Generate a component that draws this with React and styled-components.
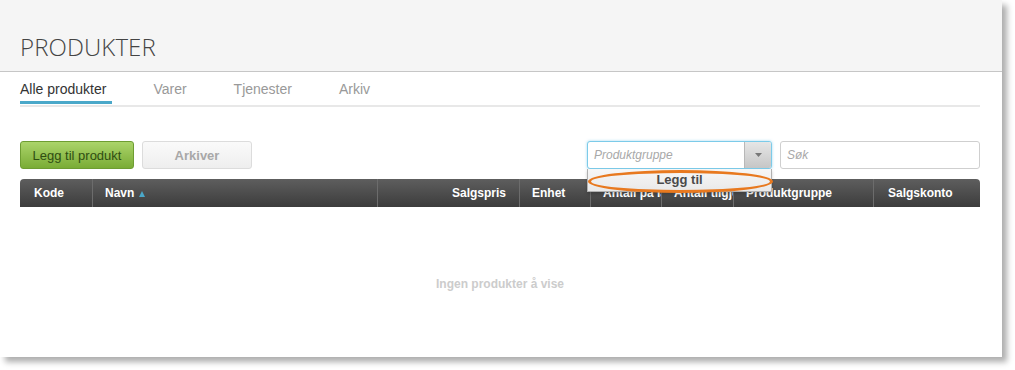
import styled, { createGlobalStyle } from 'styled-components';

const GlobalStyle = createGlobalStyle`
    body {
        margin: 0;
        background: #ffffff;
        font-family: "Liberation Sans", Arial, sans-serif;
    }
`;

const Page = styled.div`
    height: 370px;
    overflow: hidden;
`;

const Panel = styled.div`
    width: 1002px;
    height: 357px;
    background: #ffffff;
    box-shadow: 5px 5px 6px rgba(0, 0, 0, 0.32);
    display: flex;
    flex-direction: column;
`;

const Header = styled.div`
    height: 71px;
    background: #f5f5f5;
    border-bottom: 1px solid #c6c6c6;
    display: flex;
    align-items: flex-end;
    padding: 0 20px;
    box-sizing: content-box;
`;

const Title = styled.h1`
    margin: 0 0 9px;
    font-family: "Open Sans", sans-serif;
    font-weight: 300;
    font-size: 24px;
    line-height: 30px;
    color: #444;
    letter-spacing: 0.1px;
`;

const Body = styled.div`
    padding: 0 22px 0 20px;
    display: flex;
    flex-direction: column;
`;

const TabBar = styled.div`
    display: flex;
    gap: 41px;
    padding-top: 7px;
    border-bottom: 2px solid #e8e8e8;
`;

const Tab = styled.div`
    font-size: 14px;
    line-height: 20px;
    padding: 0 6px 2px 0;
    margin-bottom: 1px;
    color: ${({ $active }) => ($active ? '#333' : '#999')};
    border-bottom: 3px solid ${({ $active }) => ($active ? '#4aa8c9' : 'transparent')};
`;

const Toolbar = styled.div`
    display: flex;
    align-items: flex-start;
    margin-top: 34px;
    height: 28px;
`;

const Button = styled.button`
    height: 28px;
    padding: 0;
    width: ${({ $w }) => $w}px;
    margin-right: 8px;
    border-radius: 3px;
    font-family: "Liberation Sans", Arial, sans-serif;
    font-size: 13px;
    cursor: pointer;
`;

const GreenButton = styled(Button)`
    background: linear-gradient(#abd46a, #7aac36);
    border: 1px solid #6e9d32;
    color: #2f4d12;
`;

const GrayButton = styled(Button)`
    background: linear-gradient(#fafafa, #eeeeee);
    border: 1px solid #dcdcdc;
    color: #a8a8a8;
    font-weight: bold;
`;

const Spacer = styled.div`
    flex: 1;
`;

const SelectWrap = styled.div`
    position: relative;
    width: 185px;
    height: 28px;
    margin-right: 8px;
`;

const SelectBox = styled.div`
    height: 28px;
    box-sizing: border-box;
    border: 1px solid #7ccbe9;
    border-radius: 3px;
    box-shadow: 0 0 3px rgba(100, 190, 230, 0.6);
    display: flex;
    background: #fff;
`;

const Placeholder = styled.div`
    flex: 1;
    font-size: 12px;
    font-style: italic;
    color: #a8a8a8;
    line-height: 26px;
    padding-left: 6px;
`;

const ArrowBtn = styled.div`
    width: 26px;
    background: linear-gradient(#e6e6e6, #c6c6c6);
    border-left: 1px solid #b8b8b8;
    border-radius: 0 2px 2px 0;
    display: flex;
    align-items: center;
    justify-content: center;
`;

const Menu = styled.div`
    position: absolute;
    left: 0;
    top: 28px;
    width: 185px;
    height: 23px;
    box-sizing: border-box;
    border: 1px solid #b0b0b0;
    border-top: none;
    background: linear-gradient(#f7f7f7, #e9e9e9);
    box-shadow: 0 2px 3px rgba(0, 0, 0, 0.2);
    text-align: center;
    font-size: 13px;
    font-weight: bold;
    color: #4a4a4a;
    line-height: 22px;
    z-index: 2;
`;

const Highlight = styled.div`
    position: absolute;
    left: 1px;
    top: 29px;
    width: 185px;
    height: 23px;
    box-sizing: border-box;
    border: 3px solid #e8791f;
    border-radius: 50%;
    z-index: 3;
`;

const SearchInput = styled.div`
    width: 200px;
    height: 28px;
    box-sizing: border-box;
    border: 1px solid #cfcfcf;
    border-radius: 3px;
    font-size: 12px;
    font-style: italic;
    color: #a8a8a8;
    line-height: 26px;
    padding-left: 6px;
`;

const TableHead = styled.div`
    margin-top: 10px;
    height: 28px;
    display: flex;
    background: linear-gradient(#5e5e5e, #3c3c3c);
    border-radius: 4px 4px 0 0;
    overflow: hidden;
`;

const HeadCell = styled.div`
    width: ${({ $w }) => $w}px;
    box-sizing: border-box;
    padding: 0 ${({ $right }) => ($right ? '13px' : '4px')} 0 ${({ $pl }) => $pl ?? 12}px;
    text-align: ${({ $right }) => ($right ? 'right' : 'left')};
    border-left: ${({ $first }) => ($first ? 'none' : '1px solid #6c6c6c')};
    color: #fff;
    font-size: 12px;
    font-weight: bold;
    line-height: 28px;
    white-space: nowrap;
    overflow: hidden;
`;

const SortArrow = styled.span`
    display: inline-block;
    margin-left: 5px;
    width: 0;
    height: 0;
    border-left: 3px solid transparent;
    border-right: 3px solid transparent;
    border-bottom: 6px solid #4aa8c9;
    vertical-align: 0px;
`;

const Empty = styled.div`
    text-align: center;
    margin-top: 70px;
    font-size: 12px;
    font-weight: bold;
    color: #cccccc;
`;

const columns = [
    { label: 'Kode', w: 72, pl: 14 },
    { label: 'Navn', w: 285, sort: true },
    { label: 'Salgspris', w: 142, right: true },
    { label: 'Enhet', w: 71 },
    { label: 'Antall på lager', w: 71 },
    { label: 'Antall tilgjengelig', w: 72 },
    { label: 'Produktgruppe', w: 140 },
    { label: 'Salgskonto', w: 107, pl: 14 },
];

function App() {
    return (
        <Page>
            <GlobalStyle />
            <Panel>
                <Header>
                    <Title>PRODUKTER</Title>
                </Header>
                <Body>
                    <TabBar>
                        <Tab $active>Alle produkter</Tab>
                        <Tab>Varer</Tab>
                        <Tab>Tjenester</Tab>
                        <Tab>Arkiv</Tab>
                    </TabBar>
                    <Toolbar>
                        <GreenButton $w={114}>Legg til produkt</GreenButton>
                        <GrayButton $w={110}>Arkiver</GrayButton>
                        <Spacer />
                        <SelectWrap>
                            <SelectBox>
                                <Placeholder>Produktgruppe</Placeholder>
                                <ArrowBtn>
                                    <svg width="7" height="4" viewBox="0 0 7 4">
                                        <path d="M0 0h7L3.5 4z" fill="#777" />
                                    </svg>
                                </ArrowBtn>
                            </SelectBox>
                            <Menu>Legg til</Menu>
                            <Highlight />
                        </SelectWrap>
                        <SearchInput>Søk</SearchInput>
                    </Toolbar>
                    <TableHead>
                        {columns.map((c, i) => (
                            <HeadCell
                                key={c.label}
                                $w={c.w}
                                $pl={c.pl}
                                $right={c.right}
                                $first={i === 0}
                            >
                                {c.label}
                                {c.sort && <SortArrow />}
                            </HeadCell>
                        ))}
                    </TableHead>
                    <Empty>Ingen produkter å vise</Empty>
                </Body>
            </Panel>
        </Page>
    );
}

export default App;
